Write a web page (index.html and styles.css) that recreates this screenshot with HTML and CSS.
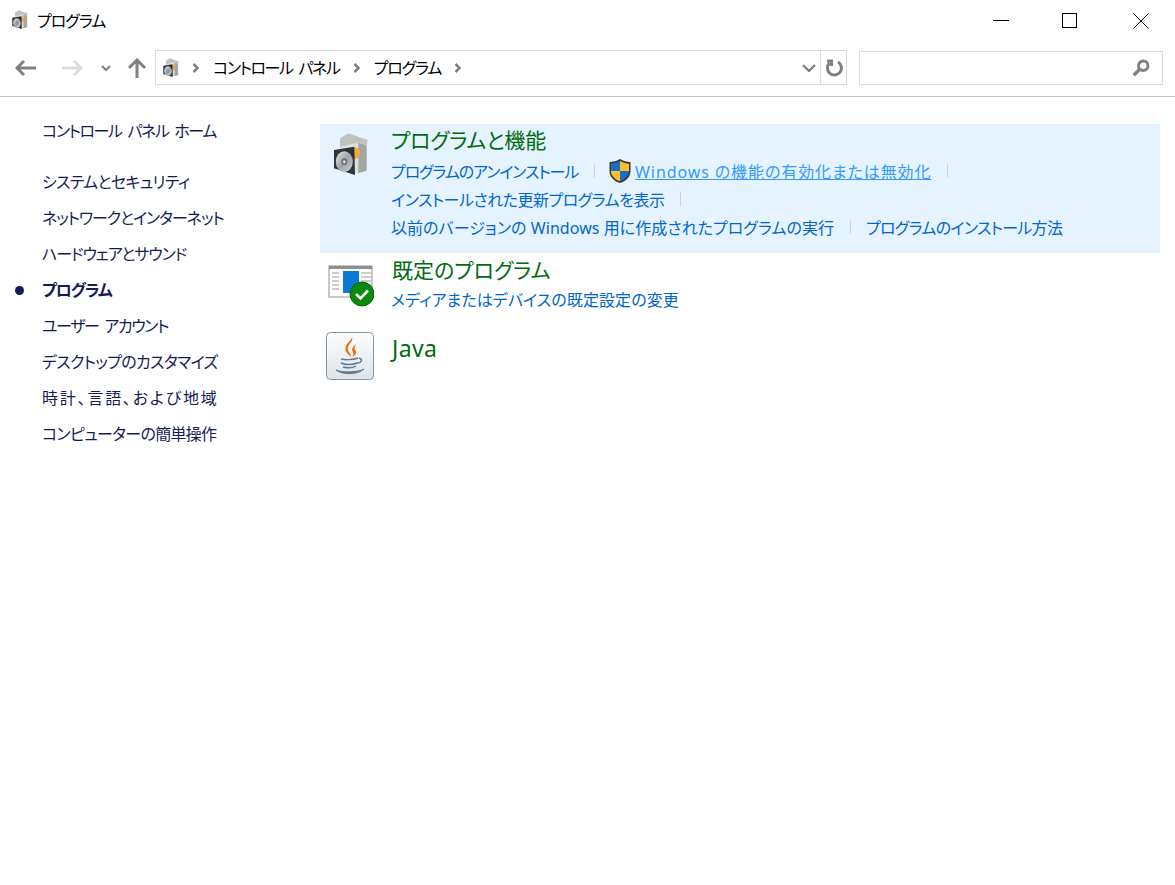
FILE: index.html
```html
<!DOCTYPE html>
<html lang="ja">

<head>
    <meta charset="UTF-8">
    <title>プログラム</title>
    <link rel="stylesheet" href="styles.css">
</head>

<body>
    <svg class="defs" width="0" height="0">
        <defs>
            <linearGradient id="discFill" x1="0" y1="0" x2="1" y2="1">
                <stop offset="0" stop-color="#e2e5e7" />
                <stop offset="0.5" stop-color="#9fa5a9" />
                <stop offset="1" stop-color="#d0d3d5" />
            </linearGradient>
            <symbol id="programs" viewBox="0 0 36 44">
                <path d="M7 12L25.300 9.700V40.300L7 37Z" fill="#d9e4d8" />
                <path d="M25.300 9.700L33.700 12V37.700L25.300 40.300Z" fill="#a5a5a2" />
                <path d="M7 5.300L15.300 0.300L34.700 7L33.700 12L25.300 9.700L7 13.700Z" fill="#c2c2bd" />
                <circle cx="21.300" cy="20.300" r="6" fill="#f2a846" />
                <path d="M1 17L21.300 13.700L22 42L1 35.300Z" fill="#2e3337" />
                <ellipse cx="11.300" cy="28.700" rx="8.500" ry="10.500" fill="url(#discFill)" />
                <ellipse cx="11.300" cy="28.700" rx="3" ry="3.600" fill="#70767a" />
                <ellipse cx="11.300" cy="28.700" rx="1.200" ry="1.500" fill="#e4e6e8" />
            </symbol>
        </defs>
    </svg>

    <header class="titlebar">
        <div class="title">
            <svg class="icon-small" width="18" height="20"><use href="#programs" /></svg>
            <span>プログラム</span>
        </div>
        <div class="window-buttons">
            <svg class="win-min" width="16" height="16" viewBox="0 0 16 16"><path d="M0 7.500H16" stroke="#000" /></svg>
            <svg class="win-max" width="16" height="16" viewBox="0 0 16 16"><rect x="0.500" y="0.500" width="14" height="14" fill="none" stroke="#000" /></svg>
            <svg class="win-close" width="16" height="16" viewBox="0 0 16 16"><path d="M0.500 0.500L15.500 15.500M15.500 0.500L0.500 15.500" stroke="#000" fill="none" /></svg>
        </div>
    </header>

    <nav class="toolbar">
        <div class="nav-buttons">
            <svg width="22" height="16" viewBox="0 0 22 16"><path d="M1 8H21M9 1L2 8L9 15" fill="none" stroke="#808080" stroke-width="3" /></svg>
            <svg class="forward" width="22" height="16" viewBox="0 0 22 16"><path d="M1 8H21M13 1L20 8L13 15" fill="none" stroke="#dcdcdc" stroke-width="3" /></svg>
            <svg class="history" width="10" height="6" viewBox="0 0 10 6"><path d="M1 1L5 5L9 1" fill="none" stroke="#808080" stroke-width="2" /></svg>
            <svg class="up" width="18" height="20" viewBox="0 0 18 20"><path d="M9 20V3M1 10L9 2L17 10" fill="none" stroke="#808080" stroke-width="3" /></svg>
        </div>
        <div class="address">
            <svg class="icon-small" width="18" height="20"><use href="#programs" /></svg>
            <svg class="crumb-arrow" width="8" height="10" viewBox="0 0 8 10"><path d="M1.500 1L5.500 5L1.500 9" fill="none" stroke="#808080" stroke-width="2.500" /></svg>
            <span class="crumb ls-space">コントロール パネル</span>
            <svg class="crumb-arrow" width="8" height="10" viewBox="0 0 8 10"><path d="M1.500 1L5.500 5L1.500 9" fill="none" stroke="#808080" stroke-width="2.500" /></svg>
            <span class="crumb ls-1">プログラム</span>
            <svg class="crumb-arrow" width="8" height="10" viewBox="0 0 8 10"><path d="M1.500 1L5.500 5L1.500 9" fill="none" stroke="#808080" stroke-width="2.500" /></svg>
            <svg class="drop" width="14" height="8" viewBox="0 0 14 8"><path d="M1 1L7 7L13 1" fill="none" stroke="#808080" stroke-width="2.400" /></svg>
            <div class="refresh">
                <svg width="18" height="18" viewBox="0 0 18 18"><path d="M4.500 4A7 7 0 1 0 13 3M2 2H6.500V7" fill="none" stroke="#808080" stroke-width="3" /></svg>
            </div>
        </div>
        <div class="search">
            <svg width="18" height="18" viewBox="0 0 16 16"><circle cx="10" cy="6" r="4.200" fill="none" stroke="#808080" stroke-width="2.600" /><path d="M7 9L1.500 14.500" stroke="#808080" stroke-width="3" /></svg>
        </div>
    </nav>

    <div class="content">
        <aside class="sidebar">
            <a class="side-home ls-space">コントロール パネル ホーム</a>
            <ul>
                <li class="ls-07">システムとセキュリティ</li>
                <li class="ls-1">ネットワークとインターネット</li>
                <li class="ls-1">ハードウェアとサウンド</li>
                <li class="current ls-1"><span class="dot"></span>プログラム</li>
                <li class="ls-space">ユーザー アカウント</li>
                <li class="ls-07">デスクトップのカスタマイズ</li>
                <li class="ls-wide">時計、言語、および地域</li>
                <li class="ls-07">コンピューターの簡単操作</li>
            </ul>
        </aside>

        <main class="main">
            <section class="category category-active">
                <svg class="category-icon icon-programs" width="36" height="44"><use href="#programs" /></svg>
                <div class="category-body">
                    <h2>プログラムと機能</h2>
                    <div class="links">
                        <a class="ls-1">プログラムのアンインストール</a><i class="sep"></i>
                        <svg class="shield" width="24" height="26" viewBox="0 0 24 26">
                            <path d="M12 1C9 3 5 4 1.500 4V13C1.500 19 6 23 12 25C18 23 22.500 19 22.500 13V4C19 4 15 3 12 1Z" fill="#3a3a3a" />
                            <path d="M12 3C9.500 4.500 6 5.500 3 5.700V13H12Z" fill="#1a6fc4" />
                            <path d="M12 3C14.500 4.500 18 5.500 21 5.700V13H12Z" fill="#fbc02d" />
                            <path d="M3 13H12V23.300C7 21.500 3 18 3 13Z" fill="#fbc02d" />
                            <path d="M21 13H12V23.300C17 21.500 21 18 21 13Z" fill="#1a6fc4" />
                        </svg>
                        <a class="hover">Windows の機能の有効化または無効化</a><i class="sep"></i>
                    </div>
                    <div class="links">
                        <a class="ls-05">インストールされた更新プログラムを表示</a><i class="sep"></i>
                    </div>
                    <div class="links">
                        <a class="ls-small">以前のバージョンの Windows 用に作成されたプログラムの実行</a><i class="sep"></i>
                        <a class="ls-07">プログラムのインストール方法</a>
                    </div>
                </div>
            </section>

            <section class="category category-default">
                <svg class="category-icon icon-default" width="46" height="42" viewBox="0 0 46 42">
                    <rect x="1" y="1" width="43" height="31" fill="#fff" stroke="#8f8f8f" stroke-width="1" />
                    <rect x="1" y="1" width="43" height="3" fill="#8f8f8f" />
                    <rect x="15" y="6" width="16" height="22" fill="#0a78d7" />
                    <path d="M4 8H11M4 12H11M4 16H11M4 20H11M4 24H11M33 8H43M33 12H43M33 16H43M33 20H43" stroke="#9a9a9a" />
                    <circle cx="34" cy="29" r="12" fill="#0a8a0a" stroke="#04660a" />
                    <path d="M28 29L32.500 33.500L40 25.500" fill="none" stroke="#fff" stroke-width="2.600" />
                </svg>
                <div class="category-body">
                    <h2>既定のプログラム</h2>
                    <div class="links">
                        <a class="ls-plus">メディアまたはデバイスの既定設定の変更</a>
                    </div>
                </div>
            </section>

            <section class="category category-java">
                <svg class="category-icon icon-java" width="48" height="48" viewBox="0 0 48 48">
                    <defs>
                        <linearGradient id="javaBg" x1="0" y1="0" x2="0" y2="1">
                            <stop offset="0" stop-color="#fdfdfd" />
                            <stop offset="1" stop-color="#dfe3e6" />
                        </linearGradient>
                    </defs>
                    <rect x="0.500" y="0.500" width="47" height="47" rx="4" fill="url(#javaBg)" stroke="#7f95a8" />
                    <path d="M26 5C28 10 20 13 22 18C23 21 25 22 25 25C22 22 18 19 20 14C21 11 25 9 26 5Z" fill="#e76f00" />
                    <path d="M30 12C27 15 25 17 27 20C28 22 27 24 26 25C30 23 31 20 29 18C28 16 29 14 30 12Z" fill="#e76f00" />
                    <g fill="none" stroke="#5f7e96" stroke-width="1.500">
                        <path d="M15 27C19 28 27 28 32 26" />
                        <path d="M15 31C19 33 27 33 31 31C36 31 37 27 33 26" />
                        <path d="M17 35C21 36 27 36 30 34" />
                    </g>
                    <path d="M10 38C16 43 32 43 38 37C34 40 16 41 10 38Z" fill="#5f7e96" stroke="#5f7e96" />
                </svg>
                <div class="category-body">
                    <h2>Java</h2>
                </div>
            </section>
        </main>
    </div>
</body>

</html>
```

FILE: styles.css
```css
* {
    box-sizing: border-box;
}

html,
body {
    height: 100%;
}

body {
    margin: 0;
    background: #ffffff;
    color: #000000;
    font-family: "Noto Sans", "Noto Sans CJK JP", sans-serif;
    font-size: 16px;
    font-feature-settings: "palt";
    overflow: hidden;
}

.defs {
    display: block;
    height: 0;
}

svg {
    display: block;
    flex: none;
}

.ls-1 {
    letter-spacing: -1.1px;
}

.ls-space {
    letter-spacing: -1.4px;
    word-spacing: 3px;
}

.ls-07 {
    letter-spacing: -0.7px;
}

.ls-05 {
    letter-spacing: -0.5px;
}

.ls-small {
    letter-spacing: 0.05px;
}

.ls-plus {
    letter-spacing: 0.1px;
}

.ls-wide {
    letter-spacing: 1.8px;
}

/* title bar */
.titlebar {
    height: 42px;
    display: flex;
    justify-content: space-between;
}

.title {
    display: flex;
    align-items: center;
    gap: 8px;
    padding: 0 0 2px 11px;
    font-size: 16px;
    letter-spacing: -1px;
}

.window-buttons {
    display: flex;
    align-items: flex-start;
    padding: 13px 26px 0 0;
}

.win-max {
    margin: 0 55px 0 53px;
}

/* toolbar */
.toolbar {
    height: 55px;
    display: flex;
    align-items: flex-start;
    padding: 8px 12px 0 15px;
    border-bottom: 1px solid #c4c4c4;
}

.nav-buttons {
    width: 140px;
    height: 35px;
    display: flex;
    align-items: center;
}

.forward {
    margin-left: 24px;
}

.history {
    margin-left: 18px;
}

.up {
    margin-left: 17px;
}

.address {
    width: 692px;
    height: 35px;
    display: flex;
    align-items: center;
    padding-left: 6px;
    border: 1px solid #d9d9d9;
}

.crumb {
    padding: 0 13px 2px;
    white-space: nowrap;
}

.address .icon-small {
    margin-right: 12px;
}

.drop {
    margin-left: auto;
    margin-right: 4px;
}

.refresh {
    width: 26px;
    height: 100%;
    display: flex;
    align-items: center;
    justify-content: center;
    border-left: 1px solid #d9d9d9;
}

.search {
    width: 304px;
    height: 34px;
    margin: 1px 0 0 12px;
    display: flex;
    align-items: center;
    justify-content: flex-end;
    padding-right: 12px;
    border: 1px solid #d9d9d9;
}

/* content */
.content {
    display: flex;
}

.sidebar {
    width: 320px;
    padding-top: 16px;
    color: #151c55;
}

.side-home {
    display: block;
    height: 36px;
    line-height: 36px;
    padding-left: 42px;
}

.sidebar ul {
    list-style: none;
    margin: 15px 0 0;
    padding: 0;
}

.sidebar li {
    height: 36px;
    line-height: 36px;
    padding-left: 42px;
    white-space: nowrap;
}

.sidebar li.current {
    display: flex;
    align-items: center;
    padding-left: 15px;
    font-weight: 700;
}

.dot {
    width: 9px;
    height: 9px;
    margin-right: 18px;
    border-radius: 50%;
    background: #151c55;
}

.main {
    width: 840px;
    padding-top: 27px;
}

.category {
    display: flex;
}

.category-active {
    height: 129px;
    background: #e5f3ff;
}

.category-body {
    padding-left: 1px;
}

.category-active .category-body {
    margin-top: -1px;
    padding-left: 0;
}

.icon-programs {
    margin: 9px 22px 0 13px;
}

.icon-default {
    margin: 12px 16px 0 8px;
}

.icon-java {
    margin: 19px 17px 0 6px;
}

h2 {
    margin: 0;
    height: 34px;
    line-height: 34px;
    font-size: 21px;
    font-weight: 400;
    color: #006b0f;
    white-space: nowrap;
}

.category-active h2 {
    letter-spacing: -0.2px;
}

.category-default h2 {
    margin-left: 1px;
}

.category-default .links {
    margin-top: -2px;
}

.category-java h2 {
    margin-top: 18px;
    font-size: 23px;
    letter-spacing: 0.4px;
}

.links {
    height: 28px;
    display: flex;
    align-items: center;
    color: #0066cc;
    white-space: nowrap;
}

.links a.hover {
    color: #3399ff;
    text-decoration: underline;
    letter-spacing: 0.9px;
}

.sep {
    width: 1px;
    height: 14px;
    margin: 0 15px 0 16px;
    background: #d0d0d0;
}

.shield {
    margin: 0 3px 0 -2px;
}
```
